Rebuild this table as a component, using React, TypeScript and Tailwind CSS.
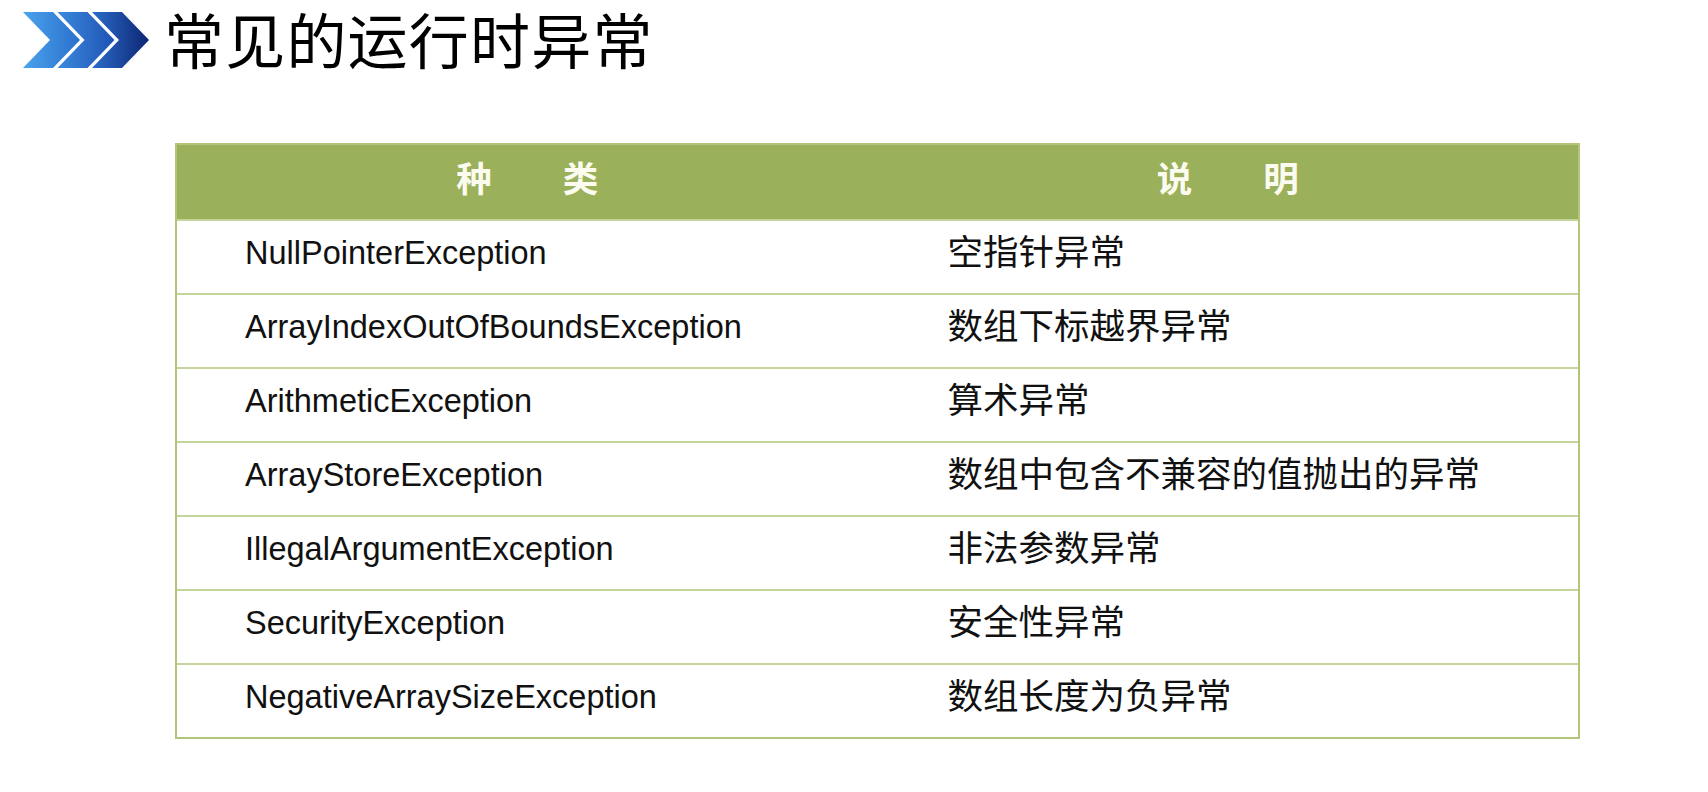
const rows: [string, string][] = [
  ["NullPointerException", "空指针异常"],
  ["ArrayIndexOutOfBoundsException", "数组下标越界异常"],
  ["ArithmeticException", "算术异常"],
  ["ArrayStoreException", "数组中包含不兼容的值抛出的异常"],
  ["IllegalArgumentException", "非法参数异常"],
  ["SecurityException", "安全性异常"],
  ["NegativeArraySizeException", "数组长度为负异常"],
];

function Chevrons() {
  const shapes = [0, 1, 2].map((i) => {
    const x = 1 + i * 34.5;
    return `${x},0 ${x + 30},0 ${x + 57},28 ${x + 30},56 ${x},56 ${x + 27},28`;
  });
  return (
    <svg width="128" height="56" viewBox="0 0 128 56">
      <defs>
        <linearGradient id="c0" x1="0" x2="1" y1="0" y2="0">
          <stop offset="0" stopColor="#4aa3ec" />
          <stop offset="1" stopColor="#2b6fcd" />
        </linearGradient>
        <linearGradient id="c1" x1="0" x2="1" y1="0" y2="0">
          <stop offset="0" stopColor="#3b8ade" />
          <stop offset="1" stopColor="#1f52b3" />
        </linearGradient>
        <linearGradient id="c2" x1="0" x2="1" y1="0" y2="0">
          <stop offset="0" stopColor="#2c6dca" />
          <stop offset="1" stopColor="#0d2573" />
        </linearGradient>
      </defs>
      {shapes.map((p, i) => (
        <polygon key={i} points={p} fill={`url(#c${i})`} />
      ))}
    </svg>
  );
}

export default function App() {
  return (
    <div className="min-h-[792px] w-[1708px] bg-white text-[#111]">
      <div className="flex h-20 items-center pl-[22px]">
        <Chevrons />
        <h1 className="ml-[14px] pb-[4px] text-[60px] leading-[1.2] font-normal tracking-[1.2px] text-black [font-family:'Noto_Sans_CJK_SC',serif]">
          常见的运行时异常
        </h1>
      </div>

      <div className="mt-[63px] ml-[175px] w-[1405px] border-2 border-[#b3c57b]">
        <div className="grid h-[74px] grid-cols-2 bg-[#9bb05a] pb-[11px] text-[35.5px] font-bold text-[#fbfbef] [font-family:'Noto_Sans_CJK_SC',serif]">
          <div className="flex items-center justify-center">种　　类</div>
          <div className="flex items-center justify-center">说　　明</div>
        </div>
        {rows.map(([name, desc]) => (
          <div
            key={name}
            className="grid h-[74px] grid-cols-2 border-t-2 border-[#c5d49b] pb-[10px]"
          >
            <div className="flex items-center pt-[2px] pl-[68px] text-[32.5px] [font-family:'Liberation_Sans',sans-serif]">
              {name}
            </div>
            <div className="flex items-center pb-[4px] pl-[70px] text-[35.5px] [font-family:'Noto_Sans_CJK_SC',sans-serif]">
              {desc}
            </div>
          </div>
        ))}
      </div>
    </div>
  );
}
